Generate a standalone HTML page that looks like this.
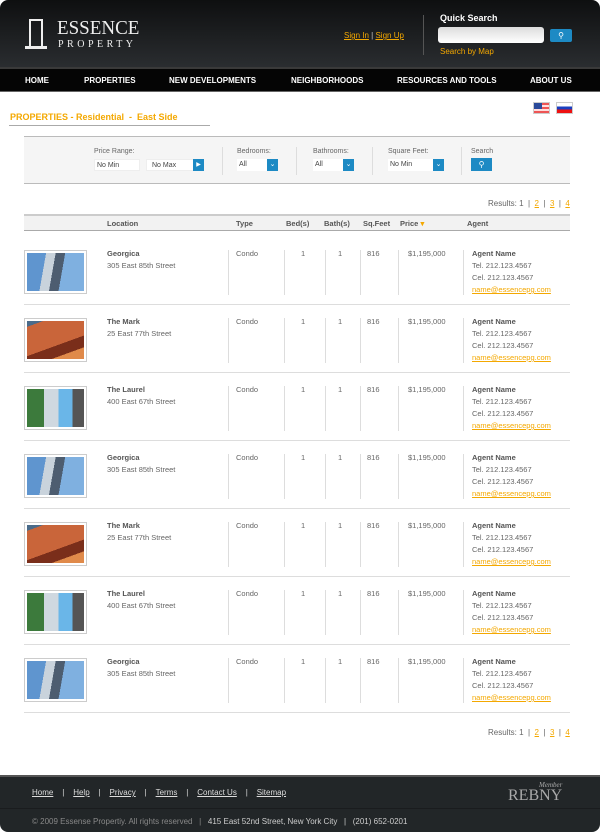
<!DOCTYPE html>
<html><head><meta charset="utf-8">
<style>
*{margin:0;padding:0;box-sizing:border-box}
body{width:600px;height:832px;background:#fff;font-family:"Liberation Sans",Arial,sans-serif;position:relative;overflow:hidden;color:#555}
.abs{position:absolute}
#hdr{left:0;top:0;width:600px;height:67px;background:linear-gradient(#0e0f10,#2a2d30);border-radius:8px 8px 0 0}
#nav{left:0;top:67px;width:600px;height:25px;background:#050505;border-top:2px solid #3a3a3a;border-bottom:1px solid #666}
#nav span{position:absolute;top:7px;color:#fff;font-size:8px;font-weight:bold}
a,.lk{color:#f4a800;text-decoration:underline}
.t8{font-size:8px}
.row{position:absolute;left:24px;width:546px;height:68px;border-bottom:1px solid #ddd}
.thumb{position:absolute;left:0;top:13px;width:63px;height:44px;border:1px solid #ccc;padding:2px;background:#fff}
.thumb div{width:100%;height:100%}
.c{position:absolute;font-size:7.5px;color:#666}
.vl{position:absolute;top:13px;height:45px;border-left:1px solid #ddd}
#foot{left:0;top:775px;width:600px;height:57px;background:#222628;border-top:2px solid #555;border-radius:0 0 8px 8px}
#foot .l{position:absolute;top:11px;color:#ddd;font-size:8px}
</style></head><body>
<div id="hdr" class="abs">
  <div class="abs" style="left:29px;top:19px;width:14px;height:27px;border:2px solid #eee;border-bottom:none"></div>
  <div class="abs" style="left:25px;top:46px;width:22px;height:3px;background:#eee"></div>
  <div class="abs" style="left:57px;top:17px;color:#eee;font-family:'Liberation Serif',serif;font-size:20px;line-height:22px;transform:scaleX(0.95);transform-origin:left">ESSENCE</div>
  <div class="abs" style="left:58px;top:39px;color:#eee;font-family:'Liberation Serif',serif;font-size:10px;letter-spacing:3.5px">PROPERTY</div>
  <div class="abs t8" style="left:344px;top:31px;color:#f4a800"><span class="lk">Sign In</span> <span style="color:#ccc;text-decoration:none">|</span> <span class="lk">Sign Up</span></div>
  <div class="abs" style="left:423px;top:15px;height:40px;border-left:1px solid #555"></div>
  <div class="abs" style="left:440px;top:13px;color:#fff;font-size:9px;font-weight:bold">Quick Search</div>
  <div class="abs" style="left:438px;top:27px;width:106px;height:16px;background:linear-gradient(#ddd,#fff);border-radius:3px"></div>
  <div class="abs" style="left:550px;top:29px;width:22px;height:13px;background:#1d8ac4;border-radius:2px;color:#fff;font-size:8px;text-align:center;line-height:13px">&#9906;</div>
  <div class="abs t8" style="left:440px;top:47px;color:#f4a800">Search by Map</div>
</div>
<div id="nav" class="abs">
  <span style="left:25px">HOME</span><span style="left:84px">PROPERTIES</span><span style="left:169px">NEW DEVELOPMENTS</span><span style="left:291px">NEIGHBORHOODS</span><span style="left:397px">RESOURCES AND TOOLS</span><span style="left:530px">ABOUT US</span>
</div>
<div class="abs" style="left:533px;top:102px;width:17px;height:12px;border:1px solid #ccc;background:repeating-linear-gradient(#e55 0 2px,#fdd 2px 4px)"><div style="width:8px;height:6px;background:#2a4a9a"></div></div>
<div class="abs" style="left:556px;top:102px;width:17px;height:12px;border:1px solid #ccc;background:linear-gradient(#fff 0 33%,#1a3fc0 33% 66%,#e11 66%)"></div>
<div class="abs" style="left:10px;top:112px;color:#f4a800;font-size:9px;font-weight:bold">PROPERTIES - Residential &nbsp;- &nbsp;East Side</div>
<div class="abs" style="left:9px;top:125px;width:201px;border-top:1px solid #aaa"></div>

<div class="abs" style="left:24px;top:136px;width:546px;height:48px;background:#f5f5f5;border-top:1px solid #bbb;border-bottom:1px solid #bbb">
  <div class="abs" style="left:70px;top:11px;font-size:7px;color:#666">Price Range:</div>
  <div class="abs" style="left:70px;top:22px;width:46px;height:12px;background:#fff;border:1px solid #eee;font-size:7px;padding:2px;color:#444">No Min</div>
  <div class="abs" style="left:122px;top:22px;width:48px;height:12px;background:#fff;border:1px solid #eee;font-size:7px;padding:2px 5px;color:#444">No Max</div>
  <div class="abs" style="left:169px;top:22px;width:11px;height:12px;background:#1d8ac4;color:#fff;font-size:6px;text-align:center;line-height:12px">&#9654;</div>
  <div class="abs" style="left:198px;top:10px;height:28px;border-left:1px solid #ddd"></div>
  <div class="abs" style="left:213px;top:11px;font-size:7px;color:#666">Bedrooms:</div>
  <div class="abs" style="left:213px;top:22px;width:30px;height:12px;background:#fff;font-size:7px;padding:2px;color:#444">All</div>
  <div class="abs" style="left:243px;top:22px;width:11px;height:12px;background:#1d8ac4;color:#fff;font-size:7px;text-align:center;line-height:12px">&#8964;</div>
  <div class="abs" style="left:272px;top:10px;height:28px;border-left:1px solid #ddd"></div>
  <div class="abs" style="left:289px;top:11px;font-size:7px;color:#666">Bathrooms:</div>
  <div class="abs" style="left:289px;top:22px;width:30px;height:12px;background:#fff;font-size:7px;padding:2px;color:#444">All</div>
  <div class="abs" style="left:319px;top:22px;width:11px;height:12px;background:#1d8ac4;color:#fff;font-size:7px;text-align:center;line-height:12px">&#8964;</div>
  <div class="abs" style="left:348px;top:10px;height:28px;border-left:1px solid #ddd"></div>
  <div class="abs" style="left:364px;top:11px;font-size:7px;color:#666">Square Feet:</div>
  <div class="abs" style="left:364px;top:22px;width:45px;height:12px;background:#fff;font-size:7px;padding:2px;color:#444">No Min</div>
  <div class="abs" style="left:409px;top:22px;width:11px;height:12px;background:#1d8ac4;color:#fff;font-size:7px;text-align:center;line-height:12px">&#8964;</div>
  <div class="abs" style="left:437px;top:10px;height:28px;border-left:1px solid #ddd"></div>
  <div class="abs" style="left:447px;top:11px;font-size:7px;color:#666">Search</div>
  <div class="abs" style="left:447px;top:21px;width:21px;height:13px;background:#1d8ac4;color:#fff;font-size:8px;text-align:center;line-height:13px">&#9906;</div>
</div>

<div class="abs t8" style="left:488px;top:199px;color:#666">Results: 1 &nbsp;| &nbsp;<a>2</a> &nbsp;| &nbsp;<a>3</a> &nbsp;| &nbsp;<a>4</a></div>
<div class="abs" style="left:24px;top:214px;width:546px;height:17px;background:#f2f2f2;border-top:2px solid #ccc;border-bottom:1px solid #aaa;font-size:7.5px;font-weight:bold;color:#555">
  <span class="abs" style="left:83px;top:3px">Location</span><span class="abs" style="left:212px;top:3px">Type</span><span class="abs" style="left:262px;top:3px">Bed(s)</span><span class="abs" style="left:300px;top:3px">Bath(s)</span><span class="abs" style="left:339px;top:3px">Sq.Feet</span><span class="abs" style="left:376px;top:3px">Price <span style="color:#f4a800">&#9662;</span></span><span class="abs" style="left:443px;top:3px">Agent</span>
</div>

<div id="rows"></div>
<script>
var data=[["Georgica","305 East 85th Street",0],["The Mark","25 East 77th Street",1],["The Laurel","400 East 67th Street",2],["Georgica","305 East 85th Street",0],["The Mark","25 East 77th Street",1],["The Laurel","400 East 67th Street",2],["Georgica","305 East 85th Street",0]];
var imgs=["linear-gradient(100deg,#5f95cf 0 30%,#c9d3dc 30% 45%,#4d5d70 45% 60%,#7fb0e0 60%)","linear-gradient(160deg,#4a6b8a 0 10%,#c9653a 10% 60%,#7a2e1a 60% 80%,#e08a4a 80%)","linear-gradient(90deg,#3c7a3c 0 30%,#cfd8e0 30% 55%,#6ab6e8 55% 80%,#555 80%)"];
var h="";
data.forEach(function(d,i){
 var t=237+i*68;
 h+='<div class="row" style="top:'+t+'px"><div class="thumb"><div style="background:'+imgs[d[2]]+'"></div></div>'+
 '<div class="c" style="left:83px;top:12px;font-weight:bold;color:#555">'+d[0]+'</div>'+
 '<div class="c" style="left:83px;top:24px">'+d[1]+'</div>'+
 '<div class="vl" style="left:204px"></div><div class="c" style="left:212px;top:12px">Condo</div>'+
 '<div class="vl" style="left:260px"></div><div class="c" style="left:277px;top:12px">1</div>'+
 '<div class="vl" style="left:301px"></div><div class="c" style="left:314px;top:12px">1</div>'+
 '<div class="vl" style="left:336px"></div><div class="c" style="left:343px;top:12px">816</div>'+
 '<div class="vl" style="left:374px"></div><div class="c" style="left:384px;top:12px">$1,195,000</div>'+
 '<div class="vl" style="left:439px"></div>'+
 '<div class="c" style="left:448px;top:12px;font-weight:bold;color:#555">Agent Name</div>'+
 '<div class="c" style="left:448px;top:24px">Tel. 212.123.4567</div>'+
 '<div class="c" style="left:448px;top:36px">Cel. 212.123.4567</div>'+
 '<div class="c" style="left:448px;top:48px;color:#f4a800;text-decoration:underline">name@essencepg.com</div></div>';
});
document.getElementById("rows").innerHTML=h;
</script>

<div class="abs t8" style="left:488px;top:728px;color:#666">Results: 1 &nbsp;| &nbsp;<a>2</a> &nbsp;| &nbsp;<a>3</a> &nbsp;| &nbsp;<a>4</a></div>

<div id="foot" class="abs">
  <div class="l" style="left:32px;color:#ddd"><u>Home</u> &nbsp;&nbsp;&nbsp;| &nbsp;&nbsp;&nbsp;<u>Help</u> &nbsp;&nbsp;&nbsp;| &nbsp;&nbsp;&nbsp;<u>Privacy</u> &nbsp;&nbsp;&nbsp;| &nbsp;&nbsp;&nbsp;<u>Terms</u> &nbsp;&nbsp;&nbsp;| &nbsp;&nbsp;&nbsp;<u>Contact Us</u> &nbsp;&nbsp;&nbsp;| &nbsp;&nbsp;&nbsp;<u>Sitemap</u></div>
  <div class="abs" style="left:539px;top:4px;color:#aaa;font-family:'Liberation Serif',serif;font-style:italic;font-size:7px">Member</div>
  <div class="abs" style="left:508px;top:10px;color:#aaa;font-family:'Liberation Serif',serif;font-size:16px">REBNY</div>
  <div class="abs" style="left:0;top:31px;width:600px;border-top:1px solid #1a1c1e"></div>
  <div class="abs" style="left:32px;top:40px;color:#888;font-size:8px">© 2009 Essense Propertiy. All rights reserved &nbsp;&nbsp;| &nbsp;&nbsp;<span style="color:#ccc">415 East 52nd Street, New York City &nbsp;&nbsp;| &nbsp;&nbsp;(201) 652-0201</span></div>
</div>
</body></html>
